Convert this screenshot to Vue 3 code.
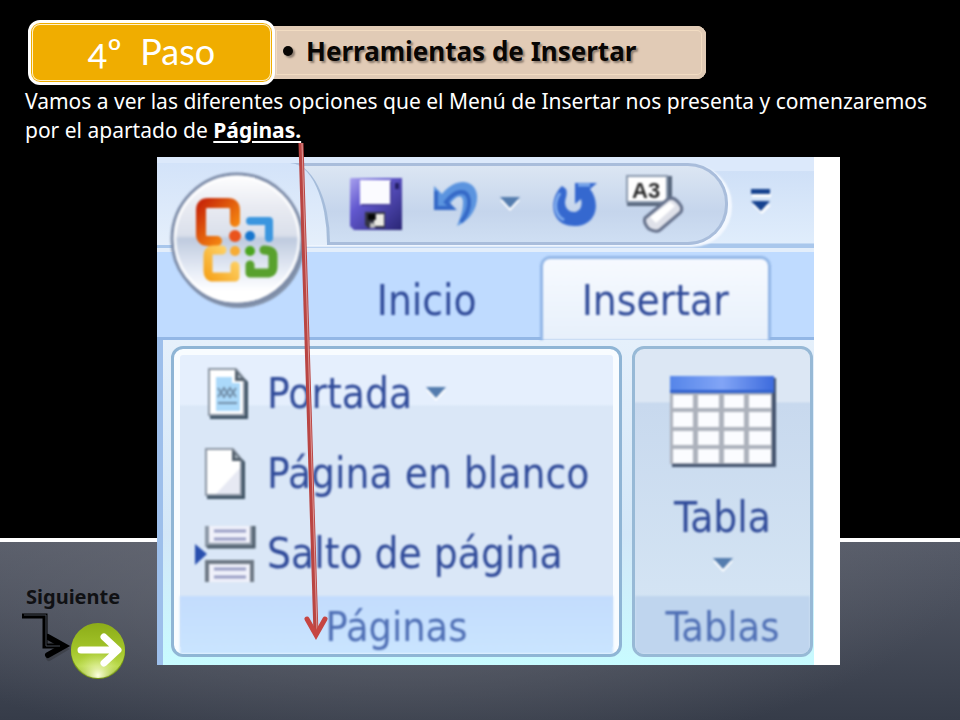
<script setup>
const pageCommands = [
  { id: 'cover', label: 'Portada', menu: true },
  { id: 'blank', label: 'Página en blanco', menu: false },
  { id: 'break', label: 'Salto de página', menu: false },
]
</script>

<template>
  <div class="slide">
    <header class="step">
      <div class="step-badge">4º&nbsp; Paso</div>
      <h1 class="step-title">Herramientas de Insertar</h1>
    </header>

    <p class="intro">
      Vamos a ver las diferentes opciones que el Menú de Insertar nos presenta y comenzaremos
      por el apartado de <strong>Páginas.</strong>
    </p>

    <main class="stage">
      <a class="next" href="#siguiente">
        <span>Siguiente</span>
        <svg class="next-art" width="112" height="74" viewBox="0 0 112 74" aria-hidden="true">
          <defs>
            <linearGradient id="ball" x1="0" y1="0" x2="0" y2="1">
              <stop offset="0" stop-color="#8cac18" />
              <stop offset=".5" stop-color="#a3c52a" />
              <stop offset=".8" stop-color="#b9d94a" />
              <stop offset="1" stop-color="#8fb21c" />
            </linearGradient>
            <radialGradient id="glow" cx=".5" cy=".95" r=".45">
              <stop offset="0" stop-color="#fdffe0" />
              <stop offset="1" stop-color="#d8ee80" stop-opacity="0" />
            </radialGradient>
          </defs>
          <path d="M26 28 41 37 26 46" fill="none" stroke="#222" stroke-opacity=".3" stroke-width="6" stroke-linecap="round" transform="translate(1 3)" />
          <path d="M0 7H23V37H38" fill="none" stroke="#000" stroke-width="5" />
          <path d="M26 28 42 37 26 46" fill="none" stroke="#000" stroke-width="6" stroke-linecap="round" />
          <path d="M2 6H24V37H38" fill="none" stroke="#454a54" stroke-width="1" />
          <circle cx="76" cy="43" r="27" fill="#789a14" />
          <circle cx="76" cy="41" r="27" fill="url(#ball)" />
          <circle cx="76" cy="42" r="27" fill="url(#glow)" />
          <path d="M59 41H94M82 28 96 41 82 54" fill="none" stroke="#fff" stroke-width="7" stroke-linecap="round" stroke-linejoin="round" />
        </svg>
      </a>

      <figure class="capture">
        <div class="ribbon">
          <div class="quick">
            <div class="orb-bay"></div>
            <div class="quick-tools">
              <button type="button" aria-label="Guardar">
                <svg width="54" height="54" viewBox="0 0 54 54">
                  <defs>
                    <linearGradient id="disk" x1="0" y1="0" x2="1" y2="1">
                      <stop offset="0" stop-color="#a9a1ee" /><stop offset=".35" stop-color="#6258cf" /><stop offset="1" stop-color="#292574" />
                    </linearGradient>
                  </defs>
                  <path d="M2 1H53V53H5L1 49V2Z" fill="url(#disk)" />
                  <path d="M11 3H42V28H11Z" fill="#fbfbff" />
                  <path d="M42 4V28H12" fill="none" stroke="#4a429f" stroke-width="2" />
                  <path d="M46 6h4v6h-4z" fill="#231f65" />
                  <path d="M16 35H36V51H19L16 48Z" fill="#333442" />
                  <path d="M27 37H35V49H25V43H27Z" fill="#eceae4" />
                  <path d="M21 46h5v5h-5z" fill="#bbb" /><path d="M19 37h7v6h-7z" fill="#050505" />
                </svg>
              </button>
              <button class="undo" type="button" aria-label="Deshacer">
                <svg width="46" height="48" viewBox="0 0 46 48">
                  <path d="M1 6V30H23L17 24C23 15 30 14 30 22C30 30 28 36 24 46C38 40 45 27 44 15C42 0 24-4 9 14Z" fill="#5b94df" />
                  <path d="M3 11V28H19L13 22C22 10 34 8 36 20C37 29 33 36 28 42" fill="none" stroke="#3569c7" stroke-width="4" />
                </svg>
              </button>
              <button class="undo-menu" type="button" aria-label="Opciones de deshacer">
                <svg width="22" height="14" viewBox="0 0 22 14"><path d="M1 3H21L11 14Z" fill="#fff" /><path d="M1 0H21L11 11Z" fill="#547cae" /></svg>
              </button>
              <button class="redo" type="button" aria-label="Rehacer">
                <svg width="46" height="46" viewBox="0 0 46 46">
                  <path d="M10 5C-4 18-2 45 22 45C45 45 49 22 38 8L45 2H23V23L29 18C33 34 14 35 13 22C13 17 16 14 14 8Z" fill="#3568cf" />
                  <path d="M8 12C0 24 4 35 12 39M26 4H38" fill="none" stroke="#7eabed" stroke-width="3" />
                </svg>
              </button>
              <button class="format" type="button" aria-label="Borrar formato">
                <svg width="60" height="60" viewBox="0 0 60 60">
                  <path d="M2 2H47V32H2Z" fill="#56657b" /><path d="M2 2H42V28H2Z" fill="#fff" stroke="#8998ad" stroke-width="2" />
                  <text x="7" y="24" font-family="Liberation Sans" font-size="22" font-weight="bold" fill="#292929">A3</text>
                  <path d="M20 44 43 25Q48 22 54 29Q59 35 55 39L35 56Q31 59 24 55Q18 49 20 44Z" fill="#dfe1e9" stroke="#64708a" stroke-width="3" />
                  <path d="M25 43 45 28 50 32 31 49Z" fill="#fff" />
                </svg>
              </button>
            </div>
            <button class="customize" type="button" aria-label="Personalizar barra">
              <svg width="20" height="26" viewBox="0 0 20 26"><path d="M1 5H20V9H1ZM1 17H20L11 26Z" fill="#fff" /><path d="M0 1H19V6H0ZM0 13H19L10 23Z" fill="#16428f" /></svg>
            </button>
          </div>

          <nav class="tabs">
            <a class="tab" href="#inicio">Inicio</a>
            <a class="tab active" href="#insertar">Insertar</a>
          </nav>

          <div class="groups">
            <section class="group pages">
              <ul class="commands">
                <li v-for="c in pageCommands" :key="c.id">
                  <button class="command" type="button">
                    <span class="command-icon">
                      <svg v-if="c.id === 'break'" width="62" height="58" viewBox="0 0 62 58">
                        <path d="M1 19 13 29 1 40Z" fill="#294fae" />
                        <path d="M13 1V20H58V1" fill="#f0f1fa" stroke="#8c98a6" stroke-width="4" />
                        <path d="M13 57V37H58V57" fill="#f0f1fa" stroke="#6d7884" stroke-width="4" />
                        <path d="M20 6H52M20 14H52M20 44H52M20 52H52" stroke="#999fc5" stroke-width="3" />
                        <path d="M13 22H60V1" fill="none" stroke="#4a5b69" stroke-width="3" />
                      </svg>
                      <svg v-else :class="c.id" width="43" height="52" viewBox="0 0 43 52">
                        <path d="M3 2H30L41 14V51H3Z" fill="#3f5364" />
                        <path d="M2 1H29L37 11V47H2Z" fill="#fff" stroke="#8b95a3" stroke-width="2" />
                        <path v-if="c.id === 'blank'" d="M36 20V46H12Z" fill="#e7e9f3" />
                        <template v-else>
                          <path d="M9 9H25V15H33V43H9Z" fill="#abd9fa" />
                          <path d="m11 20 6 9 6-9 6 9M11 29l6-9 6 9 6-9M11 35H30" fill="none" stroke="#728fa9" stroke-width="2" />
                        </template>
                        <path d="M28 1V13H39Z" fill="#53606d" /><path d="M31 6V10H35Z" fill="#abb7c2" />
                      </svg>
                    </span>
                    <span>{{ c.label }}</span>
                    <svg v-if="c.menu" class="caret" width="20" height="14" viewBox="0 0 20 14"><path d="M0 3H20L10 14Z" fill="#fff" /><path d="M0 0H20L10 11Z" fill="#547cae" /></svg>
                  </button>
                </li>
              </ul>
              <h2 class="group-name">Páginas</h2>
            </section>

            <section class="group tables">
              <button class="table-command" type="button">
                <svg width="108" height="94" viewBox="0 0 108 94">
                  <defs><linearGradient id="head" x1="0" y1="0" x2="1" y2="0"><stop offset="0" stop-color="#5585e9" /><stop offset=".5" stop-color="#82a5f6" /><stop offset="1" stop-color="#3d6bdd" /></linearGradient></defs>
                  <path d="M3 3H107V92H3Z" fill="#43536d" />
                  <path d="M1 1H103V89H1Z" fill="#adb2bc" />
                  <path d="M1 1H105V18H1Z" fill="url(#head)" /><path d="M1 15H105V18H1Z" fill="#3162cf" />
                  <path d="M4 20h20v13H4zM29 20h21v13H29zM55 20h20v13H55zM80 20h22v13H80zM4 37h20v15H4zM29 37h21v15H29zM55 37h20v15H55zM80 37h22v15H80zM4 56h20v14H4zM29 56h21v14H29zM55 56h20v14H55zM80 56h22v14H80zM4 74h20v14H4zM29 74h21v14H29zM55 74h20v14H55zM80 74h22v14H80z" fill="#fbfcff" />
                </svg>
                <span>Tabla</span>
                <svg width="20" height="14" viewBox="0 0 20 14"><path d="M0 3H20L10 14Z" fill="#fff" /><path d="M0 0H20L10 11Z" fill="#547cae" /></svg>
              </button>
              <h2 class="group-name">Tablas</h2>
            </section>
          </div>

          <button class="orb" type="button" aria-label="Botón de Office">
            <svg width="136" height="140" viewBox="0 0 136 140">
              <defs>
                <linearGradient id="orbFill" x1="0" y1="0" x2="0" y2="1">
                  <stop offset="0" stop-color="#fff" /><stop offset=".25" stop-color="#e9ebf2" /><stop offset=".47" stop-color="#dbe0eb" />
                  <stop offset=".5" stop-color="#bfcbdf" /><stop offset=".75" stop-color="#e8edf7" /><stop offset=".9" stop-color="#fff" />
                </linearGradient>
                <linearGradient id="red" x1="0" y1="0" x2="1" y2="1"><stop offset="0" stop-color="#c82808" /><stop offset="1" stop-color="#ff9b13" /></linearGradient>
                <linearGradient id="gold" x1="0" y1="1" x2="1" y2="0"><stop offset="0" stop-color="#f6a51f" /><stop offset="1" stop-color="#ffd971" /></linearGradient>
              </defs>
              <circle cx="69" cy="72" r="66" fill="#8392aa" />
              <circle cx="67" cy="69" r="65" fill="url(#orbFill)" stroke="#7c8ba7" stroke-width="3" />
              <circle cx="67" cy="69" r="62" fill="none" stroke="#fff" stroke-opacity=".8" stroke-width="3" />
              <path d="M47 71H38Q31 71 31 64V40Q31 33 38 33H58Q65 33 65 40V52" fill="none" stroke="url(#red)" stroke-width="10" stroke-linecap="round" />
              <circle cx="65" cy="66" r="6" fill="#ea531c" />
              <path d="M80 51H99V68" fill="none" stroke="#3a96df" stroke-width="8" stroke-linecap="round" stroke-linejoin="round" />
              <circle cx="80" cy="66" r="5" fill="#1776ce" />
              <path d="M52 80H43Q38 80 38 86V101Q38 107 43 107H65V96" fill="none" stroke="url(#gold)" stroke-width="9" stroke-linecap="round" stroke-linejoin="round" />
              <circle cx="65" cy="81" r="5" fill="#f7ac35" />
              <path d="M80 95V103H97Q103 103 103 97V86Q103 80 94 80" fill="none" stroke="#58a12d" stroke-width="9" stroke-linecap="round" stroke-linejoin="round" />
              <circle cx="80" cy="81" r="5" fill="#4ba51f" />
            </svg>
          </button>
        </div>

        <svg class="pointer" width="40" height="504" viewBox="0 0 40 504" aria-hidden="true">
          <path d="M10 0 25 492" stroke="#b94543" stroke-width="5" />
          <path d="M11 0 26 488" stroke="#dd9896" stroke-width="1" />
          <path d="M16 476 25 492 34 476" fill="none" stroke="#c64542" stroke-width="5" stroke-linecap="round" />
        </svg>
      </figure>
    </main>
  </div>
</template>

<style>
body { margin: 0; background: #000; }
</style>

<style scoped>
* { box-sizing: border-box; }
button { border: 0; padding: 0; background: none; font: inherit; color: inherit; cursor: pointer; }
svg { display: block; flex: none; }
.slide {
  min-height: 100vh;
  padding-top: 20px;
  color: #fff;
  font-family: "Noto Sans", sans-serif;
  background:
    linear-gradient(#000 0 538px, #fff 538px 542px, transparent 542px),
    radial-gradient(ellipse 60% 30% at 42% 76%, #686b75, transparent),
    linear-gradient(#565b68 75%, #363c49 100%);
}
.step { display: flex; align-items: center; padding-left: 28px; }
.step-badge {
  position: relative;
  width: 247px;
  height: 65px;
  border: 3px solid #fff;
  border-radius: 12px;
  background: #f0ad00;
  box-shadow: inset 0 0 0 1px #f0ad00, inset 0 0 0 2px #fff3cf;
  font-size: 36px;
  line-height: 56px;
  text-align: center;
  font-family: Lato, sans-serif;
  font-variant-numeric: oldstyle-nums;
}
.step-title {
  display: flex;
  align-items: center;
  gap: 13px;
  width: 434px;
  height: 53px;
  margin: 0 0 0 -3px;
  padding: 0 0 4px 11px;
  border-radius: 0 9px 9px 0;
  background: #e1cbb6;
  box-shadow: inset 0 0 0 4px #e1cbb6, inset 0 0 0 5px #f2dcc2;
  color: #080604;
  font-size: 26px;
  line-height: 32px;
  font-weight: 700;
  white-space: nowrap;
  text-shadow: 2px 2px 2px #8d7d70;
}
.step-title::before { content: ""; width: 10px; height: 10px; border-radius: 50%; background: #080604; box-shadow: 2px 2px 2px #8d7d70; }
.intro { margin: 2px 24px 0 25px; font-size: 21px; line-height: 29px; }
.intro strong { text-decoration: underline; text-underline-offset: 3px; }
.stage { display: grid; grid-template-columns: 157px minmax(0, 1fr) 120px; margin-top: 12px; }
.next {
  align-self: end;
  padding-left: 22px;
  margin-bottom: -18px;
  color: #101114;
  font-size: 20px;
  line-height: 24px;
  font-weight: 700;
  text-decoration: none;
}
.next span { padding-left: 4px; }
.capture { position: relative; margin: 0; padding-right: 26px; background: linear-gradient(90deg, #bcd8fb 50%, #fff 50%); }
.ribbon {
  position: relative;
  overflow: hidden;
  background: #bfdbff;
  color: #2f4a99;
  font-family: "DejaVu Sans Condensed", "DejaVu Sans", sans-serif;
  font-size: 42px;
  line-height: 48px;
}
.ribbon svg, .ribbon span, .tab, .group-name { filter: blur(1px); }
.ribbon .command-icon svg { filter: none; }
.quick {
  display: flex;
  align-items: end;
  height: 95px;
  padding-bottom: 3px;
  border-bottom: 4px solid #e3eefb;
  background: linear-gradient(#dce9fb 0 15%, #cfe0f7 16%, #e0edfc 94%, #a9c7ec 96%);
}
.orb-bay { z-index: 1; width: 173px; height: 82px; border-right: 3px solid #a5bcda; border-radius: 0 40px 0 0 / 0 80px 0 0; background: linear-gradient(#d3e3f9, #e5effb); }
.quick-tools {
  display: flex;
  align-items: center;
  width: 438px;
  height: 82px;
  margin-left: -40px;
  padding-left: 59px;
  border: 3px solid #a9bddb;
  border-left: 0;
  border-radius: 0 40px 40px 0;
  background: linear-gradient(#dce6f3, #c5d5ec 60%, #cfdff3);
  box-shadow: 4px 2px 2px #f3f8ff;
}
.undo { margin-left: 30px; }
.undo-menu { margin-left: 20px; }
.redo { margin-left: 31px; }
.format { margin-left: 27px; }
.customize { align-self: center; margin-left: 23px; }
.tabs { display: flex; align-items: end; height: 88px; padding: 0 43px 0 157px; border-bottom: 3px solid #93b7e6; }
.tab { flex: 228 1 0; height: 81px; padding-top: 21px; text-align: center; color: #2f4a99; text-decoration: none; }
.tab.active {
  height: 84px;
  margin-bottom: -3px;
  padding-top: 18px;
  border: 3px solid #91b5e6;
  border-bottom: 0;
  border-radius: 10px 10px 0 0;
  background: linear-gradient(#f7faff, #e7f0fb);
}
.groups {
  display: grid;
  grid-template-columns: 451px minmax(0, 1fr);
  gap: 10px;
  padding: 6px 1px 8px 8px;
  border-left: 6px solid #9dbfeb;
  background: linear-gradient(#e5f0fb, #d3e7f8 60%, #c8fbff);
}
.group { display: flex; flex-direction: column; height: 311px; border: 3px solid #97b9d6; border-radius: 12px; overflow: hidden; }
.pages { border-color: #8fb5d5; background: linear-gradient(#e5effd 0 18%, #dae7f7 19%); box-shadow: inset 0 0 0 6px #f8fcff; }
.commands { flex: 1; list-style: none; margin: 0; padding: 5px 0 0 15px; }
.command { display: flex; align-items: center; gap: 6px; height: 80px; white-space: nowrap; }
.command-icon { display: grid; place-items: center; width: 72px; }
.cover { margin-left: 6px; }
.caret { margin-left: 8px; }
.group-name { height: 58px; margin: 0 6px; font-size: 41px; line-height: 62px; font-weight: 400; text-align: center; color: #4f6fb5; background: linear-gradient(#c3dcfd, #cae5ff); }
.tables { background: linear-gradient(#dce7f4 0 17%, #c8d9ee 18%, #d7e7f5); }
.tables .group-name { margin: 0; background: #bfd5ee; }
.table-command { display: flex; flex: 1; flex-direction: column; align-items: center; padding-top: 26px; }
.table-command span { margin: 25px 0 16px; }
.orb { position: absolute; z-index: 2; left: 13px; top: 13px; }
.pointer { position: absolute; z-index: 3; left: 134px; top: -14px; pointer-events: none; }
</style>
